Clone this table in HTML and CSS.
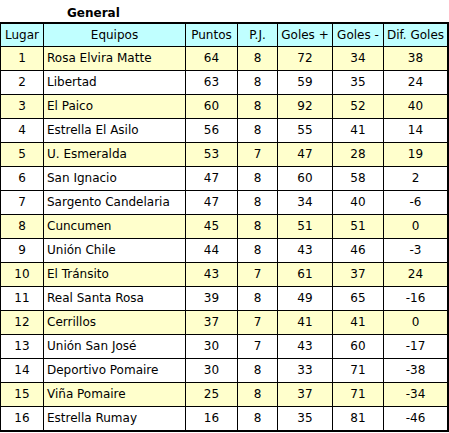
FILE: index.html
```html
<!DOCTYPE html>
<html>
<head>
<meta charset="utf-8">
<link rel="stylesheet" href="styles.css">
</head>
<body>
<div class="title">General</div>
<table class="standings">
  <colgroup>
    <col class="c-pos"><col class="c-team"><col class="c-pts"><col class="c-pj"><col class="c-gf"><col class="c-gc"><col class="c-dif">
  </colgroup>
  <thead>
    <tr><th>Lugar</th><th>Equipos</th><th>Puntos</th><th>P.J.</th><th>Goles +</th><th>Goles -</th><th>Dif. Goles</th></tr>
  </thead>
  <tbody>
    <tr class="alt"><td>1</td><td class="team">Rosa Elvira Matte</td><td>64</td><td>8</td><td>72</td><td>34</td><td>38</td></tr>
    <tr><td>2</td><td class="team">Libertad</td><td>63</td><td>8</td><td>59</td><td>35</td><td>24</td></tr>
    <tr class="alt"><td>3</td><td class="team">El Paico</td><td>60</td><td>8</td><td>92</td><td>52</td><td>40</td></tr>
    <tr><td>4</td><td class="team">Estrella El Asilo</td><td>56</td><td>8</td><td>55</td><td>41</td><td>14</td></tr>
    <tr class="alt"><td>5</td><td class="team">U. Esmeralda</td><td>53</td><td>7</td><td>47</td><td>28</td><td>19</td></tr>
    <tr><td>6</td><td class="team">San Ignacio</td><td>47</td><td>8</td><td>60</td><td>58</td><td>2</td></tr>
    <tr><td>7</td><td class="team">Sargento Candelaria</td><td>47</td><td>8</td><td>34</td><td>40</td><td>-6</td></tr>
    <tr class="alt"><td>8</td><td class="team">Cuncumen</td><td>45</td><td>8</td><td>51</td><td>51</td><td>0</td></tr>
    <tr><td>9</td><td class="team">Unión Chile</td><td>44</td><td>8</td><td>43</td><td>46</td><td>-3</td></tr>
    <tr class="alt"><td>10</td><td class="team">El Tránsito</td><td>43</td><td>7</td><td>61</td><td>37</td><td>24</td></tr>
    <tr><td>11</td><td class="team">Real Santa Rosa</td><td>39</td><td>8</td><td>49</td><td>65</td><td>-16</td></tr>
    <tr class="alt"><td>12</td><td class="team">Cerrillos</td><td>37</td><td>7</td><td>41</td><td>41</td><td>0</td></tr>
    <tr><td>13</td><td class="team">Unión San José</td><td>30</td><td>7</td><td>43</td><td>60</td><td>-17</td></tr>
    <tr><td>14</td><td class="team">Deportivo Pomaire</td><td>30</td><td>8</td><td>33</td><td>71</td><td>-38</td></tr>
    <tr class="alt"><td>15</td><td class="team">Viña Pomaire</td><td>25</td><td>8</td><td>37</td><td>71</td><td>-34</td></tr>
    <tr><td>16</td><td class="team">Estrella Rumay</td><td>16</td><td>8</td><td>35</td><td>81</td><td>-46</td></tr>
  </tbody>
</table>
</body>
</html>
```
FILE: styles.css
```css
html, body {
  margin: 0;
  padding: 0;
  background: #ffffff;
}
body {
  font-family: "DejaVu Sans", Verdana, sans-serif;
  font-size: 12px;
  color: #000000;
}
.title {
  height: 22px;
  line-height: 26px;
  padding-left: 67px;
  font-weight: bold;
  font-size: 12px;
  box-sizing: border-box;
}
.standings {
  border-collapse: separate;
  border-spacing: 0;
  table-layout: fixed;
  width: 449px;
  border-top: 2px solid #000;
  border-right: 2px solid #000;
  border-bottom: 2px solid #000;
  border-left: 1px solid #000;
}
.c-pos { width: 43px; }
.c-team { width: 142px; }
.c-pts { width: 52px; }
.c-pj { width: 40px; }
.c-gf { width: 55px; }
.c-gc { width: 51px; }
.c-dif { width: 63px; }
.standings th,
.standings td {
  box-sizing: border-box;
  padding: 0;
  text-align: center;
  font-weight: normal;
  white-space: nowrap;
  overflow: hidden;
  border-right: 1px solid #000;
  border-bottom: 1px solid #000;
}
.standings th:last-child,
.standings td:last-child {
  border-right: none;
}
.standings tbody tr:last-child td {
  border-bottom: none;
}
.standings th {
  background: #c0ffff;
  height: 23px;
  line-height: 22px;
}
.standings td {
  height: 24px;
  line-height: 23px;
}
.standings tbody tr:last-child td {
  height: 23px;
}
.standings tr.alt td {
  background: #ffffcc;
}
.standings td.team {
  text-align: left;
  padding-left: 3px;
}
```
